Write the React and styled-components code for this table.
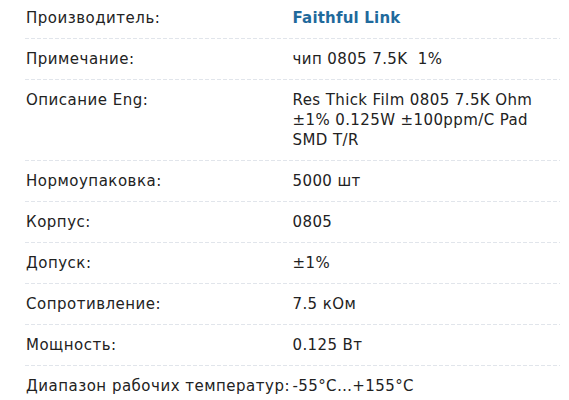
import React from "react";
import styled, { createGlobalStyle } from "styled-components";

const Global = createGlobalStyle`
  html, body { margin: 0; padding: 0; background: #fff; }
  body { font-family: "DejaVu Sans", "Liberation Sans", sans-serif; }
`;

const Wrap = styled.div`
  padding: 0 9px 0 25px;
  margin-top: -2px;
`;

const Table = styled.div`
  display: flex;
  flex-direction: column;
`;

const Row = styled.div`
  display: grid;
  grid-template-columns: 1fr 1fr;
  padding: 10px 0 11px;
  background-image: linear-gradient(to right, #e1e5eb 0 4px, transparent 4px 6px);
  background-size: 6px 1px;
  background-repeat: repeat-x;
  background-position: left bottom;
  &:last-child { background-image: none; }
`;

const Label = styled.div`
  font-size: 15px;
  letter-spacing: 0.5px;
  line-height: 20px;
  color: #222;
  white-space: nowrap;
  padding-left: 1px;
`;

const Value = styled.div`
  font-size: 15px;
  letter-spacing: ${(p) => (p.$link ? "0.2px" : "0.4px")};
  line-height: 20px;
  color: ${(p) => (p.$link ? "#1f6a9c" : "#222")};
  font-weight: ${(p) => (p.$link ? 700 : 400)};
  white-space: pre-wrap;
`;

const rows = [
  ["Производитель:", "Faithful Link", true],
  ["Примечание:", "чип 0805 7.5K  1%"],
  ["Описание Eng:", "Res Thick Film 0805 7.5K Ohm ±1% 0.125W ±100ppm/C Pad SMD T/R"],
  ["Нормоупаковка:", "5000 шт"],
  ["Корпус:", "0805"],
  ["Допуск:", "±1%"],
  ["Сопротивление:", "7.5 кОм"],
  ["Мощность:", "0.125 Вт"],
  ["Диапазон рабочих температур:", "-55°C…+155°C"],
];

export default function App() {
  return (
    <>
      <Global />
      <Wrap>
        <Table>
          {rows.map(([l, v, link]) => (
            <Row key={l}>
              <Label>{l}</Label>
              <Value $link={link}>{v}</Value>
            </Row>
          ))}
        </Table>
      </Wrap>
    </>
  );
}
